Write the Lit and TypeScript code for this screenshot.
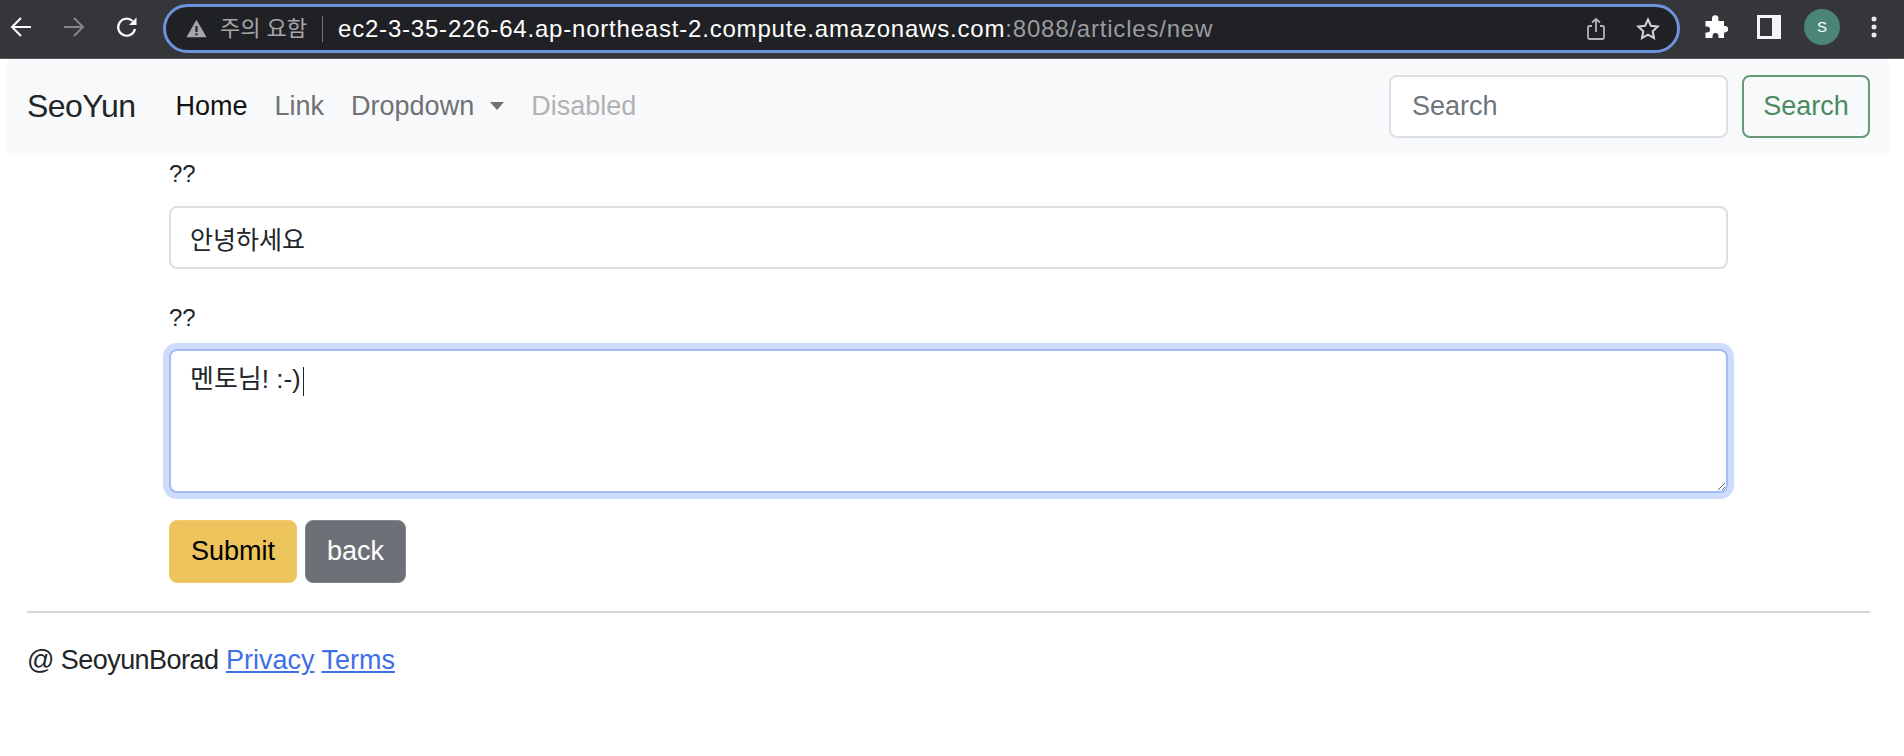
import { LitElement, html, css } from "lit";
import { customElement } from "lit/decorators.js";

@customElement("app-root")
export class AppRoot extends LitElement {
  static styles = css`
    :host { display: block; width: 1904px; height: 756px; overflow: hidden; background: #fff; color: #212529;
      font-family: "Liberation Sans", "Noto Sans CJK KR", sans-serif; font-size: 27px; line-height: 39px; }
    * { box-sizing: border-box; }
    .toolbar { height: 59px; background: #35363a; border-bottom: 1px solid #5a5b5e; display: flex; align-items: center; padding: 0 0 4px 0; }
    .tb-icon { width: 24px; height: 24px; display: block; flex: none; }
    .warn { width: 21px; height: 21px; }
    .nav-icons { display: flex; gap: 29px; padding-left: 9px; margin-right: 24px; }
    .omni { width: 1517px; height: 49px; margin-top: 3px; background: #202124; border: 3px solid #6d93dc; border-radius: 25px;
      display: flex; align-items: center; padding: 0 17px 0 20px; flex: none; }
    .warn-label { color: #a5a7ab; font-size: 22px; margin-left: 13px; white-space: nowrap; line-height: 24px; width: 88px; }
    .sep { width: 1px; height: 26px; background: #75777b; margin: 0 15px 0 14px; }
    .url { color: #fff; font-size: 24px; letter-spacing: 0.8px; white-space: nowrap; flex: 1; line-height: 28px; }
    .url span { color: #9a9ca0; }
    .omni-actions { display: flex; gap: 28px; }
    .tb-right { display: flex; align-items: center; margin-left: 24px; }
    .avatar { width: 36px; height: 36px; border-radius: 50%; background: #4b8577; color: #fff; font-size: 15px; line-height: 36px; text-align: center; margin-left: 23px; }
    .dots { margin-left: 22px; }
    .puzzle { margin-right: 29px; }

    .navbar { height: 94px; margin: 0 15px 0 7px; background: #f8f9fa; display: flex; align-items: center; padding: 0 19px 0 20px; }
    .brand { font-size: 32px; color: #212529; margin-right: 40px; letter-spacing: -0.6px; }
    .links { display: flex; gap: 27px; flex: 1; align-items: center; }
    .links a { color: #6f7275; white-space: nowrap; display: flex; align-items: center; }
    .links a.active { color: #111; }
    .links a.disabled { color: #b0b2b4; }
    .caret { width: 0; height: 0; border-left: 7px solid transparent; border-right: 7px solid transparent; border-top: 8px solid #6f7275; margin-left: 16px; }
    .search { display: flex; gap: 14px; }
    .control { display: block; font: inherit; height: 63px; border: 2px solid #dcdfe3; border-radius: 8px; background: #fff; color: #212529; padding: 0 19px; outline: none; }
    .search .control { width: 339px; padding: 0 21px; }
    .search .control::placeholder { color: #6c757d; opacity: 1; }
    .btn-search { font: inherit; height: 63px; width: 128px; padding: 0; background: transparent; border: 2px solid #659a77; color: #4b8a60; border-radius: 8px; }

    .content { padding: 0 176px 0 169px; }
    .label { display: block; line-height: 39px; font-size: 24px; }
    .label.top { padding-top: 1px; margin-bottom: 13px; }
    .label.mid { margin-bottom: 12px; }
    .field { margin-bottom: 29px; }
    .field .control { width: 100%; }
    .field .hangul { font-size: 25px; }
    .ta-wrap { position: relative; margin-bottom: 27px; }
    textarea.control { height: 144px; font-size: 26px; padding: 9px 19px; border: 2px solid #a3bdf4; box-shadow: 0 0 0 6px #cedcfb; resize: vertical; display: block; line-height: 39px; }
    .cursor { position: absolute; left: 134px; top: 18px; width: 1px; height: 29px; background: #212529; }
    .actions { display: flex; gap: 8px; }
    .btn { font: inherit; height: 63px; border-radius: 8px; padding: 0; border: 1px solid; }
    .submit { width: 128px; background: #edc35c; border-color: #f0ca6c; color: #000; }
    .back { width: 101px; background: #6c7177; border-color: #83878c; color: #fff; }
    .footer { padding: 0 34px 0 27px; }
    .rule { height: 2px; background: #d5d6d7; margin: 28px 0 28px; }
    .footer p { margin: 0; line-height: 39px; }
    .footer .tight { letter-spacing: -0.55px; }
    .footer a { color: #3f6fe6; text-decoration: underline; }
  `;

  render() {
    return html`
      <div class="toolbar">
        <div class="nav-icons">
          <svg class="tb-icon" viewBox="0 0 24 24" fill="none" stroke="#fff" stroke-width="2"><path d="M22 12H3M12 3l-9 9 9 9"/></svg>
          <svg class="tb-icon" viewBox="0 0 24 24" fill="none" stroke="#85868a" stroke-width="2"><path d="M2 12h19M12 3l9 9-9 9"/></svg>
          <svg class="tb-icon" viewBox="0 0 24 24" fill="none" stroke="#fff" stroke-width="2.2"><path d="M20 14a8.5 8.5 0 1 1-2.5-8"/><path d="M21.5 2.5v7.5h-7.5z" fill="#fff" stroke="none"/></svg>
        </div>
        <div class="omni">
          <svg class="tb-icon warn" viewBox="0 0 24 24"><path d="M12 2 23.500 22H.5z" fill="#a5a7ab"/><path d="M10.800 9h2.400v7h-2.400zM10.800 17.300h2.400v2.500h-2.400z" fill="#202124"/></svg>
          <span class="warn-label">주의 요함</span>
          <span class="sep"></span>
          <span class="url">ec2-3-35-226-64.ap-northeast-2.compute.amazonaws.com<span>:8088/articles/new</span></span>
          <div class="omni-actions">
            <svg class="tb-icon" viewBox="0 0 24 24" fill="none" stroke="#b4b5b8" stroke-width="1.8"><path d="M8 9H5.500a1.500 1.500 0 0 0-1.500 1.500v10A1.500 1.500 0 0 0 5.500 22h13a1.500 1.500 0 0 0 1.500-1.500v-10A1.500 1.500 0 0 0 18.500 9H16M12 15V2M8 5.500 12 2l4 3.500"/></svg>
            <svg class="tb-icon" viewBox="0 0 24 24" fill="none" stroke="#d5d6d8" stroke-width="2"><path d="m12 2.500 2.900 6.300 6.800.8-5 4.700 1.300 6.800-6-3.400-6 3.400 1.300-6.800-5-4.700 6.800-.8z"/></svg>
          </div>
        </div>
        <div class="tb-right">
          <svg class="tb-icon puzzle" viewBox="0 0 24 24" fill="#fff"><path d="M1.500 6H8V3.500a3.200 3.200 0 0 1 6.400 0V6h5.600v5h1a3.200 3.200 0 0 1 0 6.400h-1V23h-5.500v-2a3 3 0 0 0-6 0v2H1.500v-5.500H3a3 3 0 0 0 0-6H1.500z"/></svg>
          <svg class="tb-icon" viewBox="0 0 24 24"><path fill-rule="evenodd" d="M0 0h24v24H0zM3 3v18h12V3z" fill="#f4f5f6"/></svg>
          <div class="avatar">S</div>
          <svg class="tb-icon dots" viewBox="0 0 24 24" fill="#e8e8e9"><circle cx="12" cy="4" r="2.500"/><circle cx="12" cy="12" r="2.500"/><circle cx="12" cy="20" r="2.500"/></svg>
        </div>
      </div>

      <nav class="navbar">
        <span class="brand">SeoYun</span>
        <div class="links">
          <a class="active">Home</a>
          <a>Link</a>
          <a>Dropdown<span class="caret"></span></a>
          <a class="disabled">Disabled</a>
        </div>
        <div class="search">
          <input class="control" placeholder="Search" />
          <button class="btn-search">Search</button>
        </div>
      </nav>

      <main class="content">
        <label class="label top">??</label>
        <div class="field"><input class="control hangul" .value=${"안녕하세요"} /></div>
        <label class="label mid">??</label>
        <div class="field ta-wrap">
          <textarea class="control" .value=${"멘토님! :-)"}></textarea>
          <span class="cursor"></span>
        </div>
        <div class="actions">
          <button class="btn submit">Submit</button>
          <button class="btn back">back</button>
        </div>
      </main>

      <footer class="footer">
        <div class="rule"></div>
        <p><span class="tight">@ SeoyunBorad</span> <a>Privacy</a> <a>Terms</a></p>
      </footer>
    `;
  }
}
